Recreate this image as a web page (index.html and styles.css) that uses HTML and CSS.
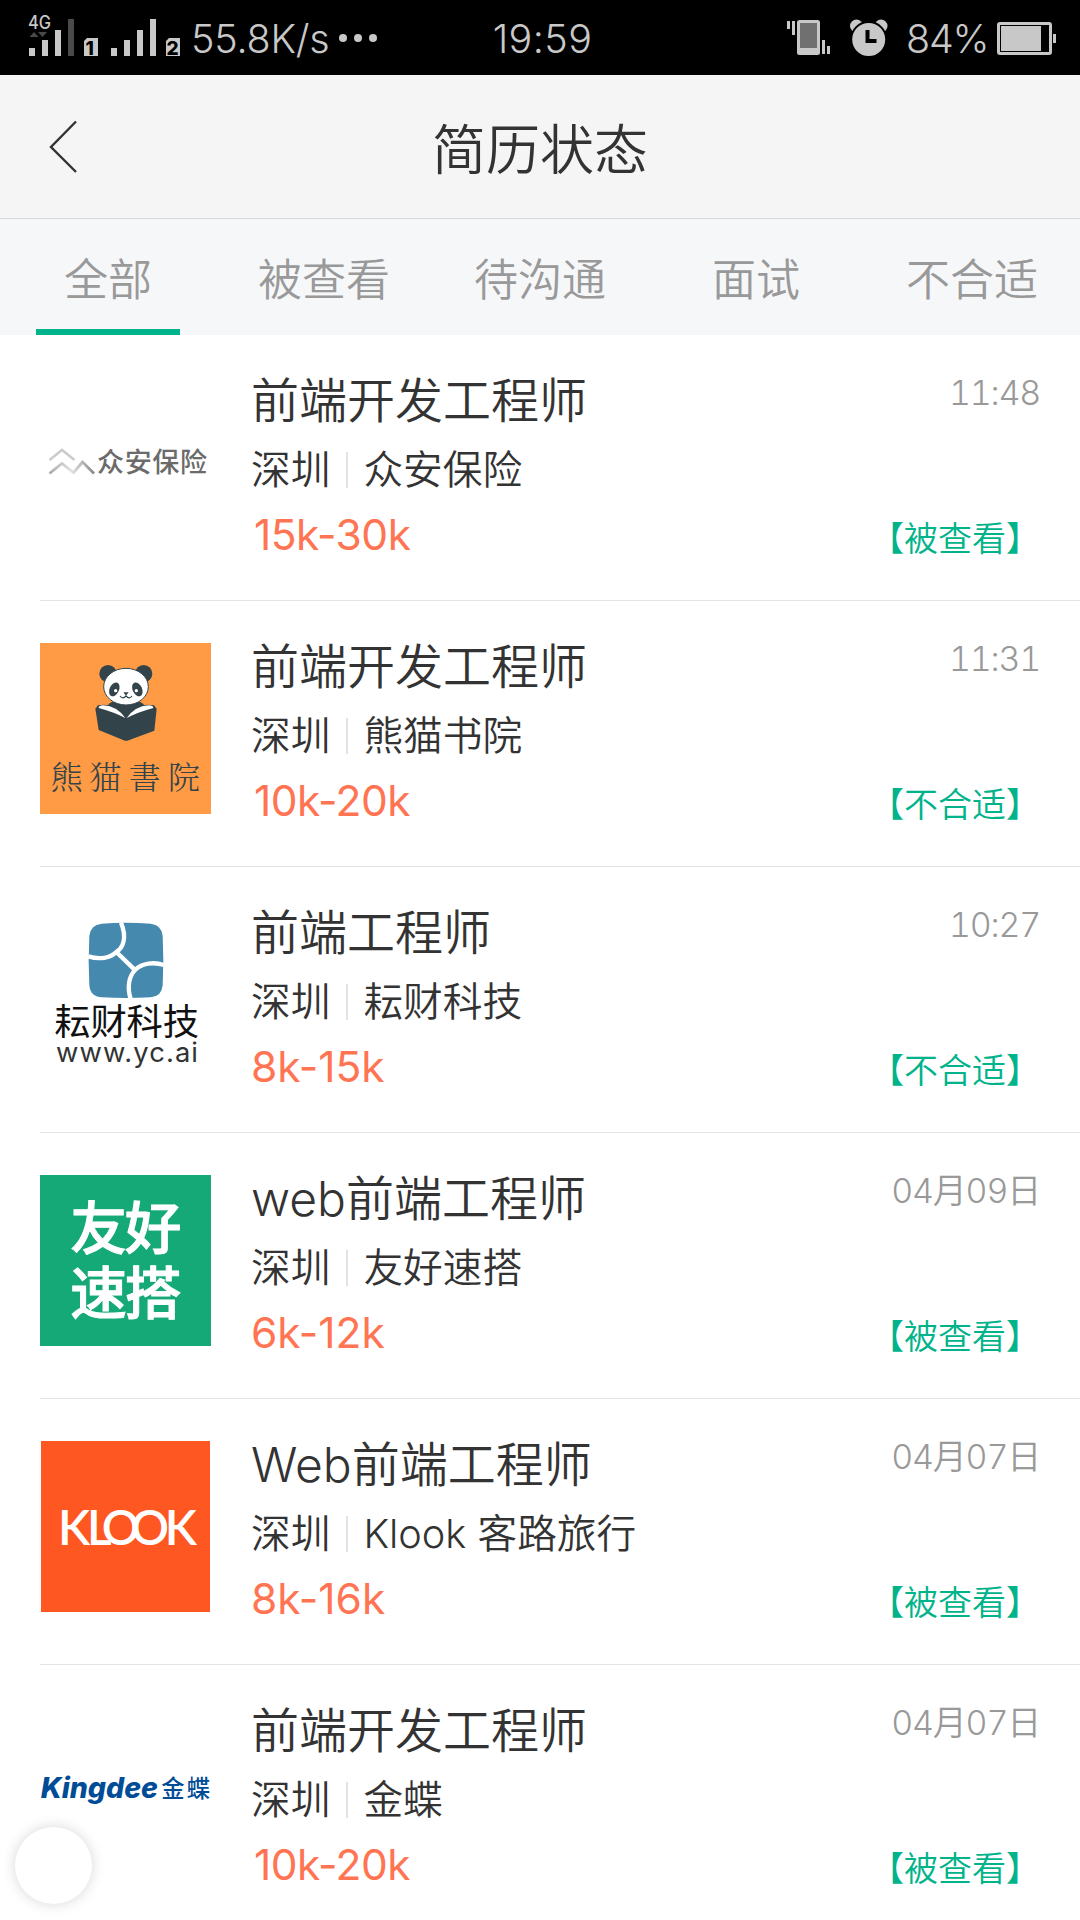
FILE: index.html
```
<!DOCTYPE html>
<html lang="zh-CN">
<head>
<meta charset="utf-8">
<title>简历状态</title>
<link rel="stylesheet" href="styles.css">
</head>
<body>
<div class="screen">
  <div class="statusbar">
    <div class="status-left">
      <svg class="signals" width="156" height="75" viewBox="0 0 156 75">
        <text class="net" x="0" y="27.500" textLength="23" lengthAdjust="spacingAndGlyphs">4G</text>
        <path fill="#4a4a4a" d="M1.500 36l4.500-5 4.500 5zM10 31h9l-4.500 5zM40 18h6v37h-6z"/>
        <path fill="#c8c8c8" d="M1 47h6v8H1zM14 39h6v16h-6zM27 29h6v26h-6zM83 47h6v8h-6zM96 39h6v16h-6zM109 29h6v26h-6zM122 18h6v37h-6z"/>
        <path fill="#c8c8c8" d="M59 37h11v18H56V40zM141 37h11v18h-14V40z"/>
        <text class="sim" x="57.500" y="53.500">1</text>
        <text class="sim" x="138.600" y="53.500">2</text>
      </svg>
      <span class="speed">55.8K/s</span>
      <svg class="dots" width="40" height="75" viewBox="0 0 40 75" fill="#c8c8c8"><circle cx="5" cy="37" r="4"/><circle cx="20" cy="37" r="4"/><circle cx="35" cy="37" r="4"/></svg>
    </div>
    <span class="clock">19:59</span>
    <div class="status-right">
      <svg width="104" height="75" viewBox="0 0 104 75">
        <rect x="11" y="19" width="23" height="35" rx="2.500" fill="#c8c8c8"/>
        <path fill="#707070" d="M14 22h17v25H14z"/>
        <path fill="#c8c8c8" d="M1 20h3v8H1zM6 20h3v14H6zM36 39h3v14h-3zM41 45h3v8h-3z"/>
        <circle cx="70.500" cy="25" r="6.500" fill="#c8c8c8"/><circle cx="95" cy="25" r="6.500" fill="#c8c8c8"/>
        <circle cx="82.700" cy="38.500" r="17.500" fill="#c8c8c8" stroke="#000" stroke-width="2"/>
        <path d="M81.500 29v11h9" fill="none" stroke="#000" stroke-width="4"/>
      </svg>
      <span class="percent">84%</span>
      <svg class="battery" width="60" height="75" viewBox="0 0 60 75">
        <rect x="1.500" y="22.500" width="52" height="30" rx="1.500" fill="none" stroke="#c8c8c8" stroke-width="3"/>
        <path fill="#c8c8c8" d="M4 25h40v25H4zM56 33h3v9h-3z"/>
      </svg>
    </div>
  </div>

  <header class="header">
    <svg class="back" width="30" height="56" viewBox="0 0 30 56"><path d="M28 2.500L3 28l25 25" fill="none" stroke="#333" stroke-width="2.400"/></svg>
    <h1 class="heading">简历状态</h1>
  </header>

  <nav class="tabs">
    <a class="tab active">全部</a>
    <a class="tab">被查看</a>
    <a class="tab">待沟通</a>
    <a class="tab">面试</a>
    <a class="tab">不合适</a>
  </nav>

  <main class="list">
    <article class="row">
      <svg class="logo" viewBox="0 0 171 171">
        <defs><linearGradient id="grey" x1="0" y1="0" x2="1" y2="0"><stop offset="0" stop-color="#aaa"/><stop offset=".5" stop-color="#e2e2e2"/><stop offset="1" stop-color="#888"/></linearGradient></defs>
        <path d="M9.500 83L22 73l12.500 10" fill="none" stroke="#ccc" stroke-width="2.600"/>
        <path d="M9.500 96.500L22 86.500l11.500 9 9-10.500 11.500 11.500" fill="none" stroke="url(#grey)" stroke-width="2.800"/>
        <text class="zhongan" x="57" y="95.300" textLength="110">众安保险</text>
      </svg>
      <div class="info"><h2 class="title">前端开发工程师</h2><p class="meta"><span>深圳</span><i class="bar"></i><span>众安保险</span></p><p class="salary one">15k-30k</p></div>
      <div class="side"><time class="time">11:48</time><span class="state">【被查看】</span></div>
    </article>

    <article class="row">
      <svg class="logo" viewBox="0 0 171 171">
        <rect width="171" height="171" fill="#ff9a45"/>
        <g transform="translate(-10 -13) scale(.33333)">
          <circle cx="234" cy="131" r="26" fill="#32444a"/><circle cx="341" cy="131" r="26" fill="#32444a"/>
          <path d="M228 236q5-20 30-24h60q25 4 30 24l-58 32z" fill="#32444a"/>
          <ellipse cx="288" cy="170" rx="67" ry="55" fill="#fff" stroke="#32444a" stroke-width="3"/>
          <ellipse cx="253" cy="178" rx="14" ry="22" transform="rotate(25 253 178)" fill="#32444a"/>
          <ellipse cx="322" cy="178" rx="14" ry="22" transform="rotate(-25 322 178)" fill="#32444a"/>
          <circle cx="257" cy="182" r="5" fill="#fff"/><circle cx="319" cy="182" r="5" fill="#fff"/>
          <path d="M280 187h16l-8 10z" fill="#32444a"/>
          <path d="M270 198q8 11 18 0q10 11 18 0" fill="none" stroke="#32444a" stroke-width="3.500"/>
          <path d="M196 236l8-10q52-10 84 35q32-45 84-35l8 10-7 66-81 30h-7l-79-32z" fill="#32444a"/>
          <path d="M206 234q0-8 14-8 40 2 66 38-35-18-80-30zM370 234q0-8-14-8-40 2-66 38 35-18 80-30z" fill="#fff"/>
          <text class="panda" x="62 178 296 414" y="478">熊猫書院</text>
        </g>
      </svg>
      <div class="info"><h2 class="title">前端开发工程师</h2><p class="meta"><span>深圳</span><i class="bar"></i><span>熊猫书院</span></p><p class="salary one">10k-20k</p></div>
      <div class="side"><time class="time">11:31</time><span class="state">【不合适】</span></div>
    </article>

    <article class="row">
      <svg class="logo" viewBox="0 0 171 171">
        <g transform="translate(-10 -9) scale(.33333)">
          <path d="M215 71Q288 66 362 71 395 74 398 108 402 182 398 256 395 290 362 292 288 296 215 292 181 290 178 256 174 182 178 108 181 74 215 71z" fill="#4589ae"/>
          <path d="M273 68c20 48 4 78-14 88-18 18-50 24-84 13M259 156l54 52M402 195c-30-10-66-6-86 14-18 18-26 50-14 88" fill="none" stroke="#fff" stroke-width="13"/>
          <text class="yuncai" x="73" y="405" textLength="434">耘财科技</text>
          <text class="url" x="78" y="487" textLength="426" lengthAdjust="spacing">www.yc.ai</text>
        </g>
      </svg>
      <div class="info"><h2 class="title">前端工程师</h2><p class="meta"><span>深圳</span><i class="bar"></i><span>耘财科技</span></p><p class="salary">8k-15k</p></div>
      <div class="side"><time class="time">10:27</time><span class="state">【不合适】</span></div>
    </article>

    <article class="row">
      <svg class="logo" viewBox="0 0 171 171">
        <rect width="171" height="171" fill="#14a977"/>
        <g transform="translate(-10 -15) scale(.33333)">
          <text class="youhao" x="121 284" y="268">友好</text>
          <text class="youhao" x="121 284" y="462">速搭</text>
        </g>
      </svg>
      <div class="info"><h2 class="title">web前端工程师</h2><p class="meta"><span>深圳</span><i class="bar"></i><span>友好速搭</span></p><p class="salary">6k-12k</p></div>
      <div class="side"><time class="time">04月09日</time><span class="state">【被查看】</span></div>
    </article>

    <article class="row">
      <svg class="logo" viewBox="0 0 171 171">
        <rect x="1" width="169" height="171" fill="#ff5722"/>
        <g transform="translate(-10 -11) scale(.33333)">
          <text class="klook" x="84 171 215 302 404" y="345">KLOOK</text>
        </g>
      </svg>
      <div class="info"><h2 class="title">Web前端工程师</h2><p class="meta"><span>深圳</span><i class="bar"></i><span>Klook 客路旅行</span></p><p class="salary">8k-16k</p></div>
      <div class="side"><time class="time">04月07日</time><span class="state">【被查看】</span></div>
    </article>

    <article class="row">
      <svg class="logo" viewBox="0 0 171 171">
        <g transform="translate(-40 13) scale(.33333)">
          <text class="kingdee" x="122" y="233" textLength="352" lengthAdjust="spacingAndGlyphs">Kingdee</text>
          <text class="jindie" x="484" y="231" textLength="146">金蝶</text>
        </g>
      </svg>
      <div class="info"><h2 class="title">前端开发工程师</h2><p class="meta"><span>深圳</span><i class="bar"></i><span>金蝶</span></p><p class="salary one">10k-20k</p></div>
      <div class="side"><time class="time">04月07日</time><span class="state">【被查看】</span></div>
    </article>
  </main>
  <div class="float-ball"></div>
</div>
</body>
</html>
```
FILE: styles.css
```
* { box-sizing: border-box; margin: 0; padding: 0; }
body { background: #fff; }
.screen {
  position: relative;
  width: 1080px;
  height: 1920px;
  overflow: hidden;
  background: #fff;
  color: #333;
  font-family: Inter, "Noto Sans CJK SC", sans-serif;
  font-weight: 350;
}
svg { display: block; flex: none; }

.statusbar {
  display: grid;
  grid-template-columns: 1fr 110px 1fr;
  align-items: center;
  height: 75px;
  padding: 2px 23px 0 28px;
  background: #000;
  color: #c8c8c8;
  font-size: 39.500px;
  font-weight: 300;
  line-height: 75px;
  white-space: nowrap;
}
.statusbar svg { margin-top: -2px; }
.status-left, .status-right { display: flex; align-items: center; }
.status-right { justify-content: flex-end; }
.clock { text-align: center; letter-spacing: 0.400px; }
.speed { width: 146px; padding-left: 7px; letter-spacing: -0.200px; }
.dots { margin-left: 8px; }
.percent { width: 91px; margin-left: 16px; letter-spacing: -1.200px; }
.net { font: 500 18px Inter, sans-serif; fill: #c8c8c8; }
.sim { font: 800 19px Inter, sans-serif; fill: #000; }

.header {
  display: grid;
  grid-template-columns: 1fr auto 1fr;
  align-items: center;
  height: 144px;
  padding: 0 48px;
  background: #f5f5f5;
  border-bottom: 1px solid #d8d8d8;
}
.heading { font-size: 54px; font-weight: 350; line-height: 80px; padding-top: 8px; }

.tabs {
  display: grid;
  grid-template-columns: repeat(5, 1fr);
  justify-items: center;
  height: 116px;
  background: #f6f7f9;
}
.tab {
  width: 144px;
  height: 116px;
  color: #999;
  font-size: 44px;
  line-height: 122px;
  text-align: center;
}
.active { border-bottom: 6px solid #00b38a; }

.row {
  display: flex;
  height: 266px;
  margin-left: 40px;
  padding-right: 40px;
  border-bottom: 1px solid #e3e3e3;
}
.logo { width: 171px; height: 171px; margin-top: 42px; }
.info { flex: 1; padding: 36px 0 0 40px; white-space: nowrap; }
.title { font-size: 48px; font-weight: 350; line-height: 60px; }
.meta { display: flex; align-items: center; margin-top: 9px; font-size: 39.700px; line-height: 60px; }
.bar { width: 2px; height: 36px; margin: 0 15px 0 16px; background: #e3e3e3; }
.salary {
  margin-top: 5px;
  color: #ff7452;
  font-size: 42.500px;
  font-weight: 400;
  line-height: 60px;
}
.one { padding-left: 3px; letter-spacing: -0.500px; }
.side {
  display: flex;
  flex-direction: column;
  align-items: flex-end;
  justify-content: space-between;
  padding: 38px 0 41px;
  line-height: 40px;
  white-space: nowrap;
}
.time {
  color: #999;
  font-size: 34px;
  font-variant-numeric: tabular-nums;
  letter-spacing: -1.200px;
}
.state { color: #00b38a; font-size: 34px; }

.zhongan { font: 500 27px "Noto Sans CJK SC", sans-serif; fill: #6b6b6b; }
.panda { font: 300 96px "Noto Serif CJK TC", "Noto Sans CJK TC", serif; fill: #32444a; }
.yuncai { font: 400 109px "Noto Sans CJK SC", sans-serif; fill: #111; }
.url { font: 400 82px Inter, sans-serif; fill: #333; }
.youhao { font: 500 170px "Noto Sans CJK SC", sans-serif; fill: #fff; stroke: #fff; stroke-width: 3px; }
.klook { font: 600 143px Lato, sans-serif; fill: #fff; }
.kingdee { font: italic 800 84px Inter, sans-serif; fill: #004c97; }
.jindie { font: 500 70px "Noto Sans CJK SC", sans-serif; fill: #004c97; }

.float-ball {
  position: absolute;
  left: 15px;
  top: 1827px;
  width: 77px;
  height: 77px;
  border-radius: 50%;
  background: #fff;
  box-shadow: 0 0 14px rgba(0, 0, 0, 0.16);
}
```
